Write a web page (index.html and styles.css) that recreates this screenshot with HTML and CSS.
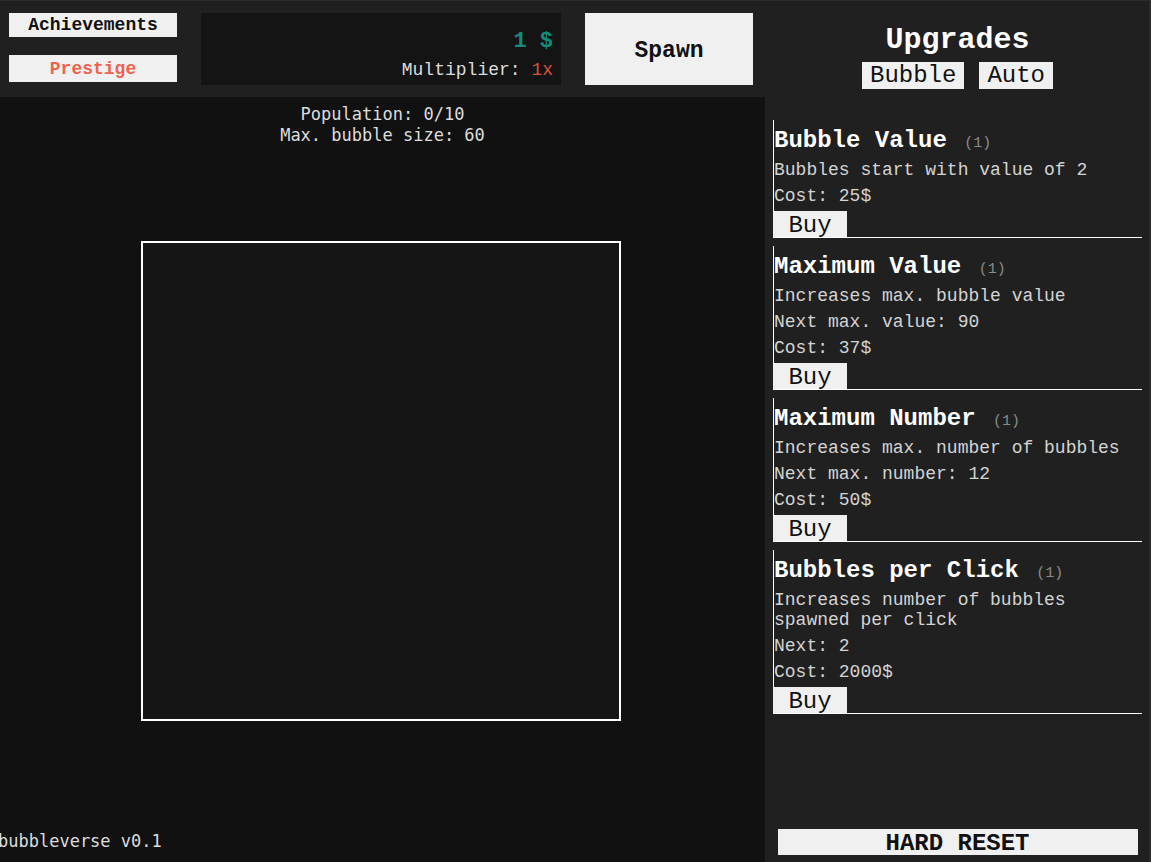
FILE: index.html
```html
<!DOCTYPE html>
<html lang="en">
<head>
    <meta charset="UTF-8">
    <meta name="viewport" content="width=device-width, initial-scale=1.0">
    <title>bubbleverse</title>
    <link rel="stylesheet" href="styles.css">
</head>
<body>
    <div class="app">
        <div class="left">
            <div class="topbar">
                <div class="menu">
                    <button type="button" class="menu-btn">Achievements</button>
                    <button type="button" class="menu-btn prestige">Prestige</button>
                </div>
                <div class="money">
                    <div class="money-value">1 $</div>
                    <div class="multiplier">Multiplier: <span class="mult-value">1x</span></div>
                </div>
                <button type="button" class="spawn">Spawn</button>
            </div>

            <div class="game">
                <div class="stats">
                    <div>Population: 0/10</div>
                    <div>Max. bubble size: 60</div>
                </div>
                <div class="field"></div>
                <div class="version">bubbleverse v0.1</div>
            </div>
        </div>

        <div class="panel">
            <h1>Upgrades</h1>
            <div class="tabs">
                <button type="button" class="tab">Bubble</button>
                <button type="button" class="tab">Auto</button>
            </div>

            <div class="upgrades">
                <div class="upgrade">
                    <div class="upgrade-info">
                        <h2>Bubble Value <span class="level">(1)</span></h2>
                        <p>Bubbles start with value of 2</p>
                        <p>Cost: 25$</p>
                    </div>
                    <button type="button" class="buy">Buy</button>
                </div>

                <div class="upgrade">
                    <div class="upgrade-info">
                        <h2>Maximum Value <span class="level">(1)</span></h2>
                        <p>Increases max. bubble value</p>
                        <p>Next max. value: 90</p>
                        <p>Cost: 37$</p>
                    </div>
                    <button type="button" class="buy">Buy</button>
                </div>

                <div class="upgrade">
                    <div class="upgrade-info">
                        <h2>Maximum Number <span class="level">(1)</span></h2>
                        <p>Increases max. number of bubbles</p>
                        <p>Next max. number: 12</p>
                        <p>Cost: 50$</p>
                    </div>
                    <button type="button" class="buy">Buy</button>
                </div>

                <div class="upgrade">
                    <div class="upgrade-info">
                        <h2>Bubbles per Click <span class="level">(1)</span></h2>
                        <p>Increases number of bubbles spawned per click</p>
                        <p>Next: 2</p>
                        <p>Cost: 2000$</p>
                    </div>
                    <button type="button" class="buy">Buy</button>
                </div>
            </div>

            <button type="button" class="reset">HARD RESET</button>
        </div>
    </div>
</body>
</html>
```

FILE: styles.css
```css
html, body {
    margin: 0;
    height: 100%;
    background-color: #202020;
}

body {
    font-family: "Courier New", "Liberation Mono", monospace;
    color: #ffffff;
    overflow: hidden;
}

button {
    font-family: "Courier New", "Liberation Mono", monospace;
    background-color: #f0f0f0;
    color: #111111;
    border: none;
    padding: 0;
    cursor: pointer;
}

.app {
    display: flex;
    height: 862px;
    box-sizing: border-box;
    border-top: 1px solid #2b2b2b;
    border-right: 2px solid #2b2b2b;
}

/* left side: top bar + game field */
.left {
    width: 765px;
    display: flex;
    flex-direction: column;
}

.topbar {
    display: flex;
    gap: 24px;
    padding: 12px 9px;
    height: 72px;
}

.menu {
    width: 168px;
    display: flex;
    flex-direction: column;
    gap: 18px;
}

.menu-btn {
    font-size: 18px;
    font-weight: bold;
    line-height: 20px;
    height: 24px;
}

.prestige {
    height: 27px;
    color: #ec6450;
}

.money {
    width: 360px;
    background-color: #141414;
    box-sizing: border-box;
    padding: 16px 8px 5px;
    text-align: right;
    display: flex;
    flex-direction: column;
    gap: 5px;
}

.money-value {
    font-size: 22px;
    font-weight: bold;
    line-height: 26px;
    color: #168a7b;
}

.multiplier {
    font-size: 18px;
    line-height: 20px;
    color: #dddddd;
}

.mult-value {
    color: #dc4f3d;
}

.spawn {
    width: 168px;
    padding-top: 3px;
    font-size: 23px;
    font-weight: bold;
}

.game {
    flex: 1;
    background-color: #111111;
    display: grid;
    grid-template-rows: 1fr auto 1fr;
    padding-top: 3px;
    font-family: "DejaVu Sans Mono", monospace;
    font-size: 17px;
    line-height: 21px;
    color: #dddddd;
}

.stats {
    text-align: center;
    margin-top: 4px;
}

.field {
    width: 480px;
    height: 480px;
    box-sizing: border-box;
    border: 2px solid #ffffff;
    background-color: #151515;
    justify-self: center;
    margin-left: -3px;
}

.version {
    align-self: end;
    margin-left: -2px;
    margin-bottom: 10px;
}

/* right side: upgrades */
.panel {
    flex: 1;
    display: flex;
    flex-direction: column;
    padding: 22px 7px 7px 8px;
}

h1 {
    margin: 0;
    font-size: 30px;
    line-height: 34px;
    text-align: center;
}

.tabs {
    display: flex;
    justify-content: center;
    gap: 15px;
    margin-top: 5px;
}

.tab {
    font-size: 24px;
    line-height: 27px;
    padding: 0 8px;
}

.upgrades {
    margin-top: 31px;
    display: flex;
    flex-direction: column;
    gap: 8px;
}

.upgrade {
    border-bottom: 1px solid #ffffff;
}

.upgrade-info {
    border-left: 1px solid #ffffff;
    padding: 7px 0 5px;
    display: flex;
    flex-direction: column;
    gap: 6px;
}

h2 {
    margin: 0;
    font-size: 24px;
    line-height: 27px;
}

.level {
    font-size: 15px;
    line-height: 1;
    font-weight: normal;
    color: #8a8a8a;
    margin-left: 3px;
}

.upgrade-info p {
    margin: 0;
    font-size: 18px;
    line-height: 20px;
    color: #d4d4d4;
}

.buy {
    display: block;
    width: 74px;
    height: 26px;
    padding-top: 3px;
    font-size: 24px;
    line-height: 23px;
}

.reset {
    margin-top: auto;
    align-self: center;
    width: 360px;
    height: 26px;
    padding-top: 3px;
    font-size: 24px;
    line-height: 23px;
    font-weight: bold;
}
```
